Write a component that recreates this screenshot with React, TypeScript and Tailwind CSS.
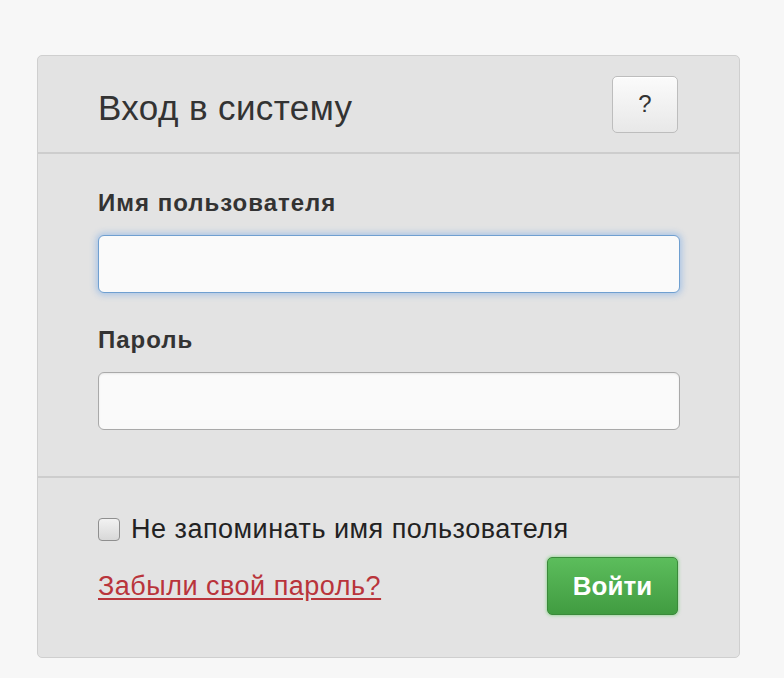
import React from "react";

export default function App() {
  return (
    <div
      className="w-[784px] h-[678px] bg-[#f7f7f7] pt-[55px] pl-[37px]"
      style={{ fontFamily: '"Liberation Sans", Arial, sans-serif' }}
    >
      <div className="w-[703px] h-[603px] bg-[#e3e3e3] border border-[#cfcfcf] rounded-[5px] flex flex-col">
        <div className="h-[98px] flex items-center justify-between pl-[60px] pr-[61px] border-b-2 border-[#cdcdcd]">
          <h1 className="text-[35px] text-[#333] leading-none tracking-[0.4px] pt-[6px]">Вход в систему</h1>
          <button className="w-[66px] h-[57px] rounded-[5px] border border-[#bdbdbd] bg-gradient-to-b from-[#fbfbfb] to-[#e8e8e8] text-[24px] text-[#333] shadow-[inset_0_1px_0_#fff]">
            ?
          </button>
        </div>
        <div className="flex-1 pl-[60px] pr-[59px] pt-[37px]">
          <label className="block text-[24px] font-bold text-[#333] leading-none tracking-[1px]">Имя пользователя</label>
          <div className="mt-[20px] h-[58px] rounded-[6px] border border-[#6f9fd0] bg-[#fafafa] shadow-[0_0_6px_2px_rgba(102,160,230,0.45)]" />
          <label className="block mt-[35px] text-[24px] font-bold text-[#333] leading-none tracking-[1px]">Пароль</label>
          <div className="mt-[20px] h-[58px] rounded-[6px] border border-[#a9a9a9] bg-[#fafafa] shadow-[inset_0_1px_2px_rgba(0,0,0,0.08)]" />
        </div>
        <div className="h-[181px] border-t-2 border-[#cdcdcd] pl-[60px] pr-[61px] pt-[38px]">
          <div className="flex items-center gap-[11px]">
            <span className="w-[22px] h-[23px] rounded-[4px] border border-[#8f8f8f] bg-gradient-to-b from-[#f2f2f2] to-[#d8d8d8]" />
            <span className="text-[27px] text-[#222] leading-none tracking-[0.5px]">Не запоминать имя пользователя</span>
          </div>
          <div className="flex items-center justify-between mt-[14px]">
            <a className="text-[27px] text-[#b9343b] underline underline-offset-[3px] leading-none tracking-[0.5px]">Забыли свой пароль?</a>
            <button className="w-[131px] h-[58px] rounded-[5px] border border-[#3b8a3b] bg-gradient-to-b from-[#5cbd5c] to-[#419c41] text-white font-bold text-[26px] shadow-[0_0_3px_1px_rgba(120,210,120,0.6)]">
              Войти
            </button>
          </div>
        </div>
      </div>
    </div>
  );
}
